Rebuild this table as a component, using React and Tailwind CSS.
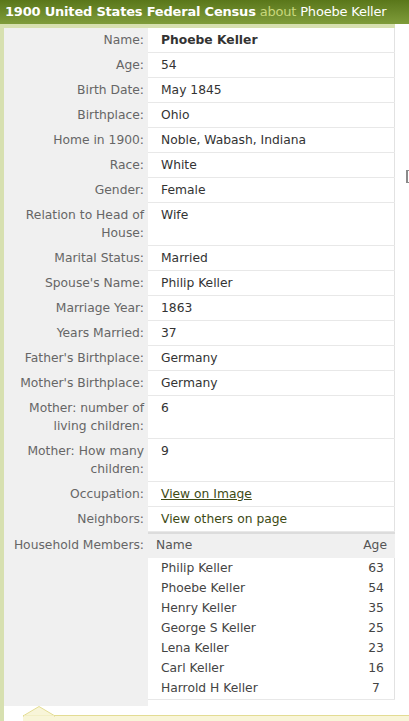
import React from "react";

const rows = [
  ["Name:", "Phoebe Keller", "bold"],
  ["Age:", "54"],
  ["Birth Date:", "May 1845"],
  ["Birthplace:", "Ohio"],
  ["Home in 1900:", "Noble, Wabash, Indiana"],
  ["Race:", "White"],
  ["Gender:", "Female"],
  ["Relation to Head of House:", "Wife", null, true],
  ["Marital Status:", "Married"],
  ["Spouse's Name:", "Philip Keller"],
  ["Marriage Year:", "1863"],
  ["Years Married:", "37"],
  ["Father's Birthplace:", "Germany"],
  ["Mother's Birthplace:", "Germany"],
  ["Mother: number of living children:", "6", null, true],
  ["Mother: How many children:", "9", null, true],
  ["Occupation:", "View on Image", "link"],
  ["Neighbors:", "View others on page", "plain-link"],
];

const members = [
  ["Philip Keller", "63"],
  ["Phoebe Keller", "54"],
  ["Henry Keller", "35"],
  ["George S Keller", "25"],
  ["Lena Keller", "23"],
  ["Carl Keller", "16"],
  ["Harrold H Keller", "7"],
];

export default function App() {
  return (
    <div className="relative w-[409px] h-[721px] overflow-hidden bg-white font-['DejaVu_Sans',sans-serif] text-[12.3px] leading-[18px]">
      {/* Title bar */}
      <div className="h-[24px] px-[5px] flex items-center bg-gradient-to-b from-[#5a771a] to-[#7f9c3a] text-white text-[13px] whitespace-nowrap tracking-[-0.2px]">
        <span className="font-bold">1900 United States Federal Census</span>
        <span className="ml-[4px] text-[#c9d77c]">about</span>
        <span className="ml-[4px]">Phoebe Keller</span>
      </div>

      <div className="border-l-[4px] border-[#d7e0b0] h-[697px]">
        <div className="border-t-[4px] border-[#d7e0b0] w-[391px]">
          <div className="grid grid-cols-[144px_247px] border-r border-[#e2e2e2]">
            {rows.map(([label, value, kind, tall]) => (
              <React.Fragment key={label}>
                <div className={`bg-[#f0f0f0] text-[#666] text-right pr-[4px] pl-[6px] pt-[3px] ${tall ? "h-[43px]" : "h-[25px]"}`}>
                  {label}
                </div>
                <div className="border-b border-[#e8e8e8] pl-[13px] pt-[3px] text-[#333]">
                  {kind === "bold" && <span className="font-bold">{value}</span>}
                  {kind === "link" && <span className="underline text-[#3d4a14]">{value}</span>}
                  {kind === "plain-link" && <span className="text-[#3d4a14]">{value}</span>}
                  {!kind && value}
                </div>
              </React.Fragment>
            ))}
            <div className="bg-[#f0f0f0] text-[#666] text-right pr-[4px] pt-[4px]">
              Household Members:
            </div>
            <div className="border-t-2 border-b border-[#dcdcdc] border-b-[#e8e8e8] pb-[1px]">
              <div className="flex justify-between bg-[#f0f0f0] pl-[8px] pr-[8px] pt-[2px] h-[24px] text-[#555]">
                <span>Name</span>
                <span>Age</span>
              </div>
              <div>
                {members.map(([n, a]) => (
                  <div key={n} className="flex justify-between h-[20px] items-center pl-[13px] pr-[9px] text-[#444]">
                    <span>{n}</span>
                    <span className="w-[20px] text-center">{a}</span>
                  </div>
                ))}
              </div>
            </div>
          </div>
          <div className="h-[6px] w-[144px] bg-[#f0f0f0]" />
        </div>

        {/* bottom pointer box */}
        <div className="relative h-[20px]">
          <div className="absolute left-[19px] right-0 top-[9px] bottom-0 bg-[#f8f5d8] border-t border-[#e3dc93]" />
          <svg className="absolute left-[19px] top-[0px]" width="32" height="11" viewBox="0 0 32 11">
            <polygon points="0,10 16,0.5 32,10" fill="#f8f5d8" stroke="#e3dc93" strokeWidth="1" />
            <rect x="1" y="9.5" width="30" height="2" fill="#f8f5d8" />
          </svg>
        </div>
      </div>

      {/* stray cut-off element at right edge */}
      <div className="absolute left-[406px] top-[170px] w-[4px] h-[13px] border-l-2 border-t border-b border-[#8a8a8a]" />
    </div>
  );
}
